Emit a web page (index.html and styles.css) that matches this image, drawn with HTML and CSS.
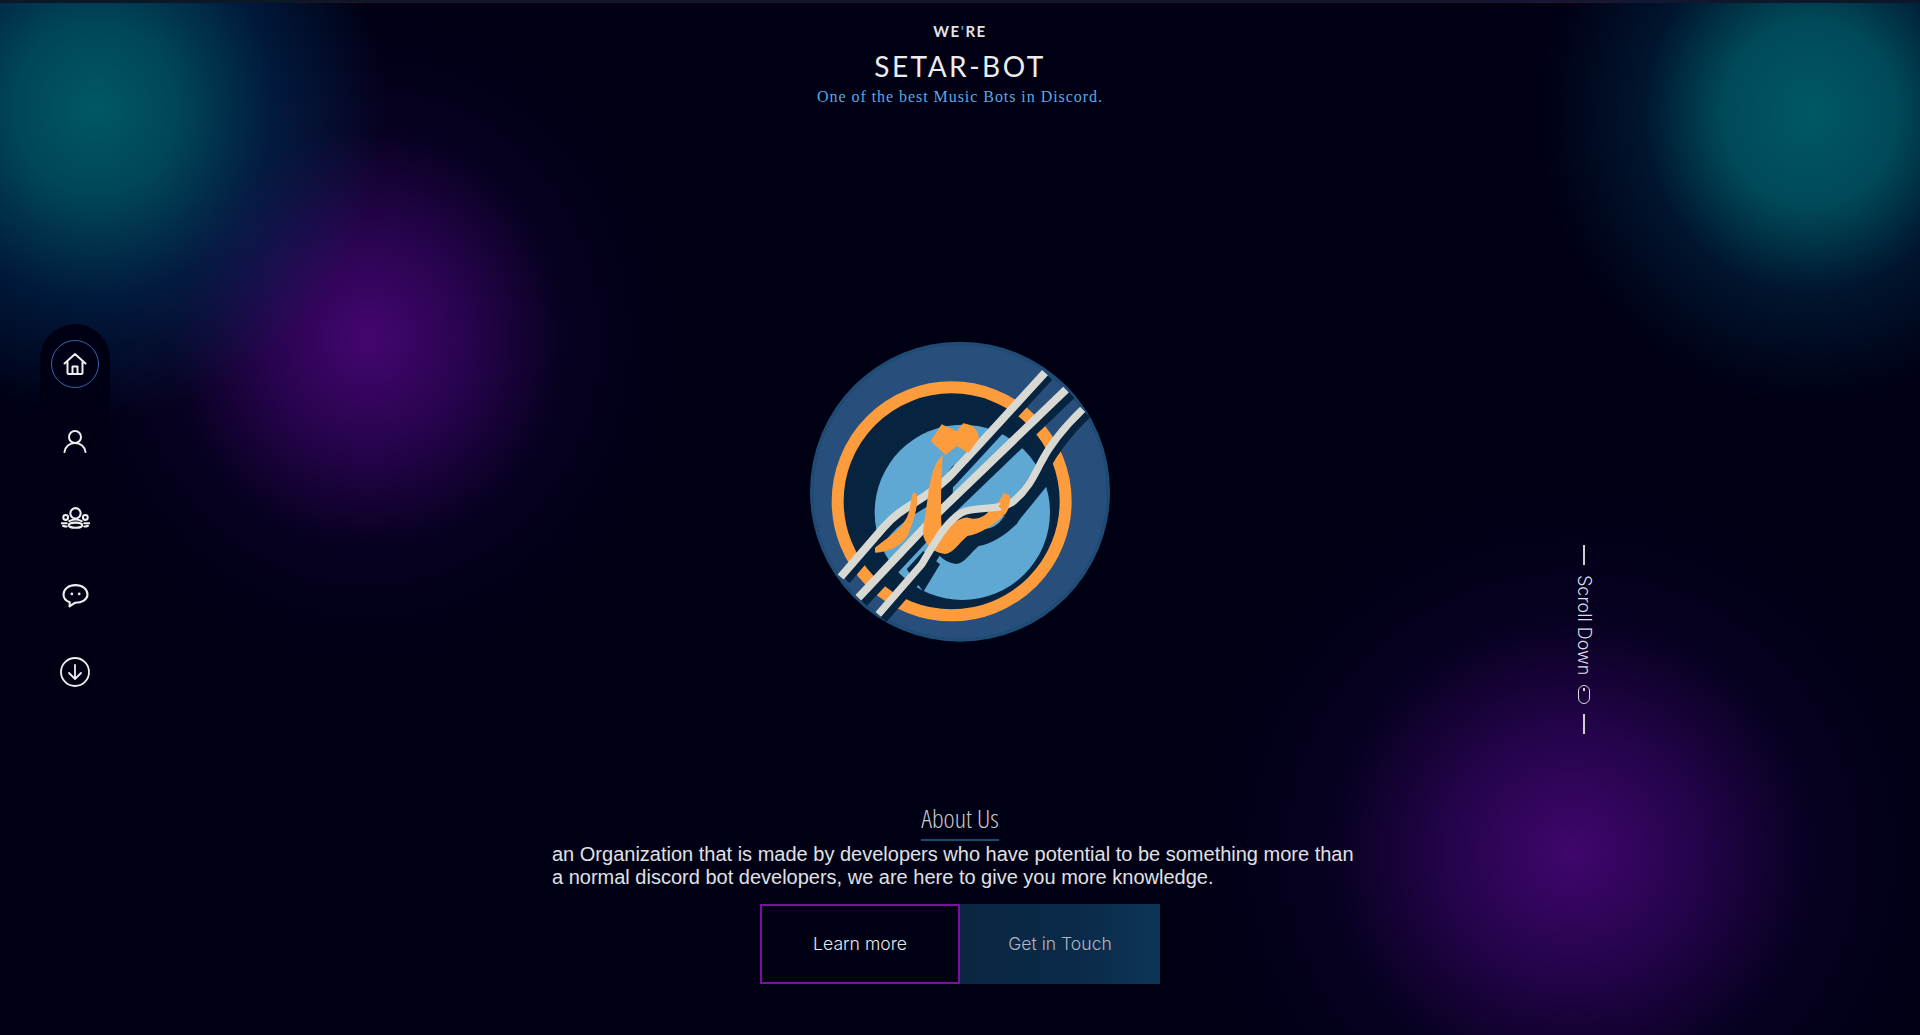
FILE: index.html
```html
<!DOCTYPE html>
<html lang="en">
<head>
<meta charset="utf-8">
<title>SETAR-BOT</title>
<link rel="stylesheet" href="styles.css">
</head>
<body>
<div class="page">
  <nav class="side">
    <a class="side-item active"><svg class="ico" viewBox="0 0 24 24"><path d="M1.500 11.500 12 2l10.500 9.500M4.500 9.500V21a1 1 0 0 0 1 1h13a1 1 0 0 0 1-1V9.500M9.500 22v-7.500h5V22"/></svg></a>
    <a class="side-item"><svg class="ico" viewBox="0 0 24 24"><circle cx="12" cy="8" r="6"/><path d="M1.500 23c.6-5.500 5-9 10.500-9s9.900 3.500 10.500 9"/></svg></a>
    <a class="side-item"><svg class="ico wide" viewBox="0 0 28 24"><circle cx="14" cy="7" r="5"/><circle cx="4.500" cy="11" r="2.300"/><circle cx="23.500" cy="11" r="2.300"/><ellipse cx="14" cy="18.500" rx="6.500" ry="2.500"/><path d="M.5 16.500h5M22.500 16.500h5M2 19c1 .6 2 .8 3.500.8M26 19c-1 .6-2 .8-3.500.8M8 14.500c4-2 8-2 12 0"/></svg></a>
    <a class="side-item"><svg class="ico wide" viewBox="0 0 26 24"><path d="M13 2C6.500 2 1.500 5.800 1.500 11c0 3.600 2.400 6.200 6 7.500l-.2 4 5-3.500c7 .2 12.200-3.300 12.200-8C24.500 5.800 19.500 2 13 2Z"/><circle class="dot" cx="9.500" cy="10.500" r="1.300"/><circle class="dot" cx="16.500" cy="10.500" r="1.300"/></svg></a>
    <a class="side-item"><svg class="ico big" viewBox="0 0 30 30"><circle cx="15" cy="15" r="14"/><path d="M15 8v14M9 16l6 6 6-6"/></svg></a>
  </nav>

  <header class="intro">
    <div class="were">WE<span class="apos">'</span>RE</div>
    <h1 class="name">SETAR-BOT</h1>
    <p class="tag">One of the best Music Bots in Discord.</p>
  </header>

  <div class="logo-wrap">
    <svg class="logo" viewBox="0 0 1200 990">
      <defs>
        <clipPath id="disc"><circle cx="600" cy="512" r="449"/></clipPath>
        <path id="letter" d="M548 402C525 420 510 470 503 530C497 580 488 620 490 645C500 680 525 695 555 699C582 695 595 668 622 645C662 638 702 612 737 578C750 560 752 540 750 525L731 515C722 535 715 545 695 560C680 585 650 600 625 590C600 585 565 620 545 625C540 550 545 470 548 402Z"/>
      </defs>
      <circle cx="600" cy="512" r="450" fill="#1f4c75"/>
      <circle cx="600" cy="512" r="441" fill="#284f7c" stroke="#1d4a70" stroke-width="3" stroke-dasharray="14 3"/>
      <circle cx="575" cy="541" r="342" fill="#06243f" stroke="#fc9c3d" stroke-width="36"/>
      <circle cx="607" cy="574" r="263" fill="#5fa8d3"/>
      <path d="M440 745L490 812L540 730L490 690Z" fill="#06243f"/>
      <use href="#letter" x="34" y="30" fill="#06243f"/>
      <path d="M775 600L865 490L830 440L740 560Z" fill="#06243f"/>
      <g clip-path="url(#disc)" fill="none" stroke="#06243f" stroke-width="24">
        <path d="M870 170 L672 385 L580 485 C500 560 440 570 385 635 L262 780" transform="translate(-2 -2)"/>
        <path d="M935 222 L556 586 L312 846"/>
        <path d="M982 280 C915 345 880 395 855 445 C835 485 815 525 770 560 C730 585 660 570 620 590 C570 620 540 680 500 745 L370 895"/>
      </g>
      <g fill="none" stroke="#d9d9d3" stroke-width="24">
        <path d="M855 155 L658 370 L565 470 C485 545 425 555 370 620 L242 768"/>
        <path d="M918 206 L540 570 L295 830"/>
      </g>
      <use href="#letter" fill="#fc9c3d"/>
      <path d="M461 513C450 530 455 560 440 590C420 630 380 650 345 680V695C390 695 430 670 445 640C465 590 475 550 470 520Z" fill="#fc9c3d"/>
      <path d="M512 360L545 310L590 330L610 307C640 310 658 330 656 355L625 396L590 375L557 402Z" fill="#fc9c3d"/>
      <path d="M968 265C900 330 865 380 840 430C820 470 800 510 755 545C715 570 645 555 605 575C555 605 525 665 485 730L355 880" fill="none" stroke="#d9d9d3" stroke-width="22"/>
      <path d="M750 525L731 515C722 535 725 548 715 556L735 575C748 560 752 540 750 525Z" fill="#fc9c3d"/>
    </svg>
  </div>

  <section class="about">
    <h2 class="about-title">About Us</h2>
    <p class="about-text">an Organization that is made by developers who have potential to be something more than<br>a normal discord bot developers, we are here to give you more knowledge.</p>
    <div class="actions">
      <a class="btn btn-outline">Learn more</a>
      <a class="btn btn-fill">Get in Touch</a>
    </div>
  </section>

  <div class="scroll">
    <span class="scroll-line"></span>
    <span class="scroll-text">Scroll Down</span>
    <span class="scroll-mouse"></span>
    <span class="scroll-line"></span>
  </div>
</div>
</body>
</html>
```
FILE: styles.css
```css
* { box-sizing: border-box; }
html, body { margin: 0; height: 100%; }
body { background: #000015; overflow: hidden; }
.page {
  position: relative;
  height: 1035px;
  display: flex;
  flex-direction: column;
  align-items: center;
  border-top: 3px solid rgba(18,40,52,.6);
  color: #e6e6e6;
  background:
    radial-gradient(ellipse 270px 290px at 1810px 110px, rgba(0,96,108,.92) 0, rgba(0,90,104,.82) 32%, rgba(0,50,80,.42) 62%, rgba(0,0,21,0) 100%),
    radial-gradient(ellipse 370px 360px at 1572px 850px, rgba(66,6,112,.97) 0, rgba(52,5,98,.72) 32%, rgba(24,3,60,.3) 65%, rgba(0,0,21,0) 100%),
    radial-gradient(ellipse 290px 310px at 95px 105px, rgba(0,96,108,.92) 0, rgba(0,88,104,.8) 28%, rgba(0,50,95,.5) 62%, rgba(0,0,21,0) 100%),
    radial-gradient(ellipse 300px 320px at 368px 335px, rgba(70,6,115,.97) 0, rgba(55,5,100,.74) 32%, rgba(24,3,60,.3) 65%, rgba(0,0,21,0) 100%),
    #000015;
}
.page::before {
  content: "";
  position: absolute;
  left: 300px;
  right: 300px;
  top: -1px;
  height: 1px;
  background: repeating-linear-gradient(90deg, #5a1022 0, #5a1022 1px, transparent 1px, transparent 4px);
}

.side {
  position: absolute;
  left: 40px;
  top: 321px;
  width: 70px;
  padding: 16px 11px 0;
  height: 430px;
  border-radius: 35px 35px 0 0;
  background: linear-gradient(180deg, #000015 0, #000015 35%, rgba(0,0,21,0) 75%);
  display: flex;
  flex-direction: column;
  align-items: center;
  gap: 29px;
}
.side-item {
  width: 48px;
  height: 48px;
  flex: none;
  display: flex;
  align-items: center;
  justify-content: center;
  border-radius: 50%;
}
.side-item.active { border: 1.500px solid #2f66aa; }
.ico {
  width: 24px;
  height: 24px;
  fill: none;
  stroke: #eeeeee;
  stroke-width: 2;
  stroke-linecap: round;
  stroke-linejoin: round;
}
.ico.wide { width: 29px; height: 25px; }
.ico.big { width: 30px; height: 30px; stroke-width: 1.800; }
.ico .dot { fill: #eeeeee; stroke: none; }

.intro {
  padding-top: 19px;
  text-align: center;
}
.were {
  font: 700 15px/18px Lato, "Liberation Sans", sans-serif;
  letter-spacing: 1.500px;
  color: #e4e4e4;
}
.apos { color: #3f9fd6; }
.name {
  margin: 8px 0 0;
  font: 400 28px/36px Lato, "Liberation Sans", sans-serif;
  letter-spacing: 2.500px;
  color: #ececec;
}
.tag {
  margin: 3px 0 0;
  font: 400 16px/20px "Liberation Serif", serif;
  letter-spacing: .95px;
  color: #5aa9e0;
}

.logo-wrap {
  height: 330px;
  margin-top: 214px;
  flex: none;
}
.logo { display: block; width: 400px; height: 330px; }

.about {
  width: 816px;
  margin-top: 152px;
  display: flex;
  flex-direction: column;
  align-items: center;
}
.about-title {
  margin: 0;
  font: 300 26.500px/30px "Open Sans", "Liberation Sans", sans-serif;
  font-stretch: 75%;
  color: #c8c8cc;
  padding-bottom: 6px;
  border-bottom: 2px solid #14506c;
}
.about-text {
  margin: 2px 0 0;
  width: 100%;
  font: 400 20px/23px "Liberation Sans", sans-serif;
  color: #e0e0e4;
}
.actions {
  display: flex;
  margin-top: 15px;
}
.btn {
  width: 200px;
  height: 80px;
  display: flex;
  align-items: center;
  justify-content: center;
  font: 300 17.600px/20px Inter, Roboto, sans-serif;
}
.btn-outline { border: 2px solid #7a0fa0; color: #e8e8e8; }
.btn-fill { background: linear-gradient(90deg, #0a2742 0, #0a2a48 60%, #0e3558 100%); color: #b0b8c0; }

.scroll {
  position: absolute;
  left: 1574px;
  top: 542px;
  width: 20px;
  display: flex;
  flex-direction: column;
  align-items: center;
  gap: 10px;
}
.scroll-line { width: 2px; height: 20px; background: #cfcfcf; }
.scroll-text {
  writing-mode: vertical-rl;
  font: 300 18px/20px Inter, Roboto, sans-serif;
  color: #dcdce4;
}
.scroll-mouse {
  position: relative;
  width: 12px;
  height: 19px;
  border: 1.500px solid #d8d8d8;
  border-radius: 6px;
}
.scroll-mouse::before {
  content: "";
  position: absolute;
  left: 3.500px;
  top: 2px;
  width: 2px;
  height: 3px;
  background: #d8d8d8;
}
```
